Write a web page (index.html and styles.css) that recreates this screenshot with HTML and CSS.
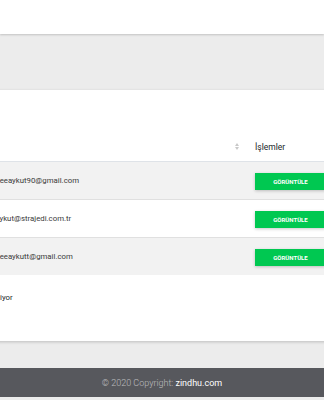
FILE: index.html
```html
<!DOCTYPE html>
<html lang="tr">
<head>
<meta charset="utf-8">
<title>Kullanıcılar</title>
<link rel="stylesheet" href="styles.css">
</head>
<body>
<div class="page">
  <header class="topbar"></header>
  <main class="content">
    <section class="card">
      <div class="table">
        <div class="tr thead">
          <div class="td c-name"><span>Ad Soyad</span><svg class="sort" width="4" height="7" viewBox="0 0 4 7"><path d="M2 0L4 3H0Z M0 4H4L2 7Z"/></svg></div>
          <div class="td c-email"><span>E-posta</span><svg class="sort" width="4" height="7" viewBox="0 0 4 7"><path d="M2 0L4 3H0Z M0 4H4L2 7Z"/></svg></div>
          <div class="td c-act">İşlemler</div>
        </div>
        <div class="tr odd">
          <div class="td c-name">Bilge Aykut</div>
          <div class="td c-email">ahmet.bilgeeaykut90@gmail.com</div>
          <div class="td c-act"><button class="btn">Görüntüle</button></div>
        </div>
        <div class="tr">
          <div class="td c-name">Ahmet Aykut</div>
          <div class="td c-email">ahmet.bilaykut@strajedi.com.tr</div>
          <div class="td c-act"><button class="btn">Görüntüle</button></div>
        </div>
        <div class="tr odd last">
          <div class="td c-name">Bilge Aykut</div>
          <div class="td c-email">ahmet.bilgeeaykutt@gmail.com</div>
          <div class="td c-act"><button class="btn">Görüntüle</button></div>
        </div>
      </div>
      <div class="info">3 kayıttan 1 - 3 arasındaki kayıtlar gösteriliyor</div>
    </section>
  </main>
  <footer class="footer"><span>© 2020 Copyright:&nbsp;</span><a href="#">zindhu.com</a></footer>
</div>
</body>
</html>
```
FILE: styles.css
```css
* { box-sizing: border-box; }
html, body { margin: 0; padding: 0; }
body {
  background: #ececec;
  font-family: Roboto, "Liberation Sans", sans-serif;
  color: #212529;
  overflow: hidden;
}
.page {
  width: 324px;
  height: 400px;
  overflow: hidden;
  display: flex;
  flex-direction: column;
}
.topbar {
  flex: none;
  height: 34px;
  background: #fff;
  box-shadow: 0 1px 2px rgba(0, 0, 0, 0.18);
  position: relative;
  z-index: 1;
}
.content {
  flex: none;
  padding: 56px 0 27px;
}
.card {
  margin-left: -158px;
  width: 560px;
  height: 251px;
  background: #fff;
  padding: 42px 15px 0;
  box-shadow: 0 1px 3px rgba(0, 0, 0, 0.2);
}
.table { font-size: 7.8px; color: #3a3a3a; }
.tr {
  display: flex;
  align-items: center;
  height: 38px;
  border-bottom: 1px solid #e0e0e0;
}
.tr.last { height: 37px; border-bottom: 0; }
.thead {
  height: 30px;
  font-size: 8.5px;
  color: #212529;
  border-bottom: 1px solid #dfe3e8;
}
.odd { background: #f2f2f2; }
.td { white-space: nowrap; }
.c-name { width: 106px; flex: none; display: flex; justify-content: space-between; padding-right: 6px; }
.c-email { width: 282px; flex: none; }
.thead .c-email { display: flex; align-items: center; justify-content: space-between; padding-right: 6.5px; }
.c-act { flex: 1; padding-left: 10px; }
.sort { display: block; fill: #c9c9c9; }
.btn {
  display: block;
  width: 71px;
  height: 17px;
  margin-top: 1px;
  padding: 0;
  border: 0;
  background: #00c851;
  color: #fff;
  font-family: inherit;
  font-size: 6px;
  font-weight: 700;
  text-transform: uppercase;
  box-shadow: 0 1px 3px rgba(0, 0, 0, 0.22);
}
.info {
  margin-top: 18px;
  font-size: 7.8px;
  line-height: 10px;
  color: #212529;
}
.footer {
  flex: none;
  height: 29px;
  background: #57585d;
  display: flex;
  align-items: center;
  justify-content: center;
  font-size: 9px;
  font-weight: 300;
  color: rgba(255, 255, 255, 0.6);
}
.footer a {
  color: #fff;
  font-weight: 400;
  text-decoration: none;
}
```
